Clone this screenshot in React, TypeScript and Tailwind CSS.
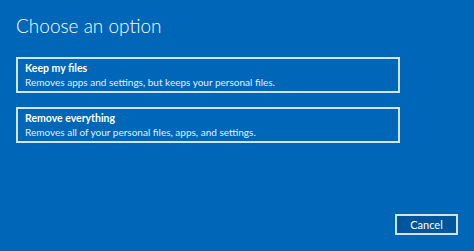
const OPTIONS = [
  {
    title: "Keep my files",
    desc: "Removes apps and settings, but keeps your personal files.",
  },
  {
    title: "Remove everything",
    desc: "Removes all of your personal files, apps, and settings.",
  },
];

const App = () => {
  return (
    <div
      className="w-[474px] h-[251px] bg-[#0067b8] text-white flex flex-col pl-4 pt-[12px] pb-4 pr-4"
      style={{ fontFamily: 'Lato, "Noto Sans", sans-serif' }}
    >
      <h1 className="text-[19px] leading-[28px] font-light">Choose an option</h1>
      <div className="mt-[17px] flex flex-col gap-[14px] w-[384px]">
        {OPTIONS.map((o) => (
          <button
            key={o.title}
            className="h-[36px] border-2 border-[#d2e4f4] px-[7px] flex flex-col justify-center text-left"
          >
            <span className="text-[10.5px] leading-[14px] font-bold">{o.title}</span>
            <span className="text-[10px] leading-[14px] text-[#e6eef8]">{o.desc}</span>
          </button>
        ))}
      </div>
      <div className="mt-auto flex justify-end">
        <button className="w-[63px] h-[21px] border-2 border-[#d2e4f4] bg-[#00569c] text-[11px] leading-none">
          Cancel
        </button>
      </div>
    </div>
  );
};

export default App;
